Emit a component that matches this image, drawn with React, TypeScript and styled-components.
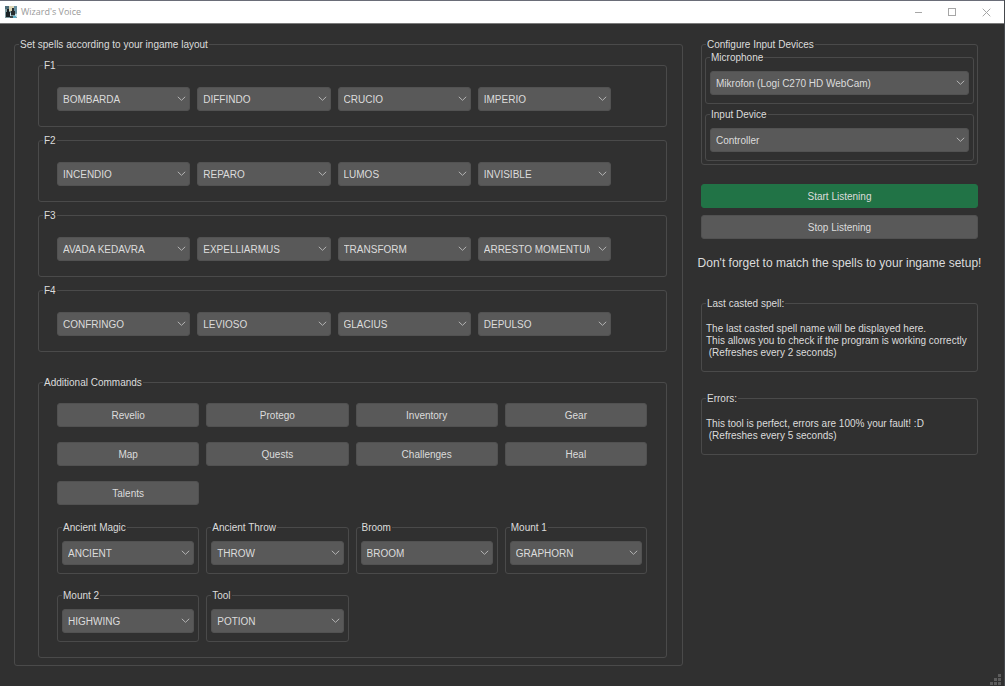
import React, { useId, useState } from "react";
import styled, { createGlobalStyle } from "styled-components";

const GlobalStyle = createGlobalStyle`
  *, *::before, *::after { box-sizing: border-box; }
  body {
    margin: 0;
    background: #303030;
    color: #dcdcdc;
    font: 10px/12px "Liberation Sans", Arial, sans-serif;
  }
  button, select { font: inherit; color: inherit; }
`;

const Window = styled.div`
  min-height: 100vh;
  display: flex;
  flex-direction: column;
  background: #303030;
  border-right: 1px solid #45484c;
`;

const TitleBar = styled.header`
  display: flex;
  align-items: center;
  height: 24px;
  padding: 0 1px 0 5px;
  background: #ffffff;
  border-top: 1px solid #6a6d78;
  border-bottom: 1px solid #7a7a7a;
`;

const Title = styled.h1`
  flex: 1;
  margin: 0 0 0 4px;
  font: 400 9px/12px "Open Sans", "Noto Sans", sans-serif;
  color: #999999;
`;

const CaptionButton = styled.button`
  display: grid;
  place-items: center;
  width: 34px;
  height: 22px;
  padding: 0;
  border: 0;
  background: transparent;
  color: #a6a6a6;
`;

const Main = styled.main`
  flex: 1;
  display: flex;
  align-items: flex-start;
  gap: 18px;
  padding: 14px 26px 0 14px;
`;

const SpellColumn = styled.div`
  flex: 1;
  min-width: 0;
`;

const SideColumn = styled.aside`
  width: 277px;
  flex: none;
`;

const Fieldset = styled.fieldset`
  min-width: 0;
  margin: 0;
  padding: 0;
  border: 1px solid #4a4a4a;
  border-radius: 3px;
`;

const Legend = styled.legend`
  margin-left: 4px;
  padding: 0 1px;
  line-height: 13px;
`;

const LayoutBody = styled.div`
  padding: 8px 15px 7px 23px;
`;

const SlotList = styled.div`
  display: grid;
  gap: 7px;
  margin-bottom: 24px;
`;

const SlotRow = styled.div`
  display: grid;
  grid-template-columns: repeat(4, minmax(0, 1fr));
  gap: 7px;
  padding: 15px 55px 15px 18px;
`;

const CommandBody = styled.div`
  display: grid;
  gap: 16px;
  padding: 14px 19px 15px 18px;
`;

const CommandGrid = styled.div`
  display: grid;
  grid-template-columns: repeat(4, minmax(0, 1fr));
  gap: 15px 7px;
`;

const PickerBody = styled.div`
  padding: 7px 4px 8px;
`;

const DeviceBody = styled.div`
  display: grid;
  gap: 4px;
  padding: 0 3px 3px;
`;

const Button = styled.button<{ $primary?: boolean }>`
  width: 100%;
  height: 24px;
  padding: 2px 0 0;
  border: 1px solid ${(p) => (p.$primary ? "#217346" : "#515151")};
  border-radius: 3px;
  background: ${(p) => (p.$primary ? "#217346" : "#595959")};
`;

const SelectFrame = styled.div`
  position: relative;
`;

const Select = styled.select`
  appearance: none;
  display: block;
  width: 100%;
  height: 24px;
  padding: 2px 20px 0 5px;
  border: 1px solid #525252;
  border-radius: 3px;
  background: #595959;
`;

const Chevron = styled.svg`
  position: absolute;
  right: 4px;
  top: 9px;
  pointer-events: none;
`;

const Actions = styled.div`
  display: grid;
  gap: 7px;
  margin-top: 19px;
`;

const Reminder = styled.p`
  display: flex;
  justify-content: center;
  margin: 14px 0 24px;
  font-size: 12px;
  line-height: 20px;
  white-space: nowrap;
`;

const Log = styled.p`
  margin: 0;
  padding: 13px 4px 12px;
  white-space: pre;
`;

const LogStack = styled.div`
  display: grid;
  gap: 20px;
`;

const StatusBar = styled.footer`
  display: flex;
  justify-content: flex-end;
  padding: 0 3px 1px 0;
`;

const SPELLS = [
  { key: "F1", spells: ["BOMBARDA", "DIFFINDO", "CRUCIO", "IMPERIO"] },
  { key: "F2", spells: ["INCENDIO", "REPARO", "LUMOS", "INVISIBLE"] },
  { key: "F3", spells: ["AVADA KEDAVRA", "EXPELLIARMUS", "TRANSFORM", "ARRESTO MOMENTUM"] },
  { key: "F4", spells: ["CONFRINGO", "LEVIOSO", "GLACIUS", "DEPULSO"] },
];
const ALL_SPELLS = SPELLS.flatMap((s) => s.spells);

const COMMANDS = [
  "Revelio", "Protego", "Inventory", "Gear",
  "Map", "Quests", "Challenges", "Heal", "Talents",
];

const PICKERS = [
  { label: "Ancient Magic", value: "ANCIENT" },
  { label: "Ancient Throw", value: "THROW" },
  { label: "Broom", value: "BROOM" },
  { label: "Mount 1", value: "GRAPHORN" },
  { label: "Mount 2", value: "HIGHWING" },
  { label: "Tool", value: "POTION" },
];

type DropdownProps = { initial: string; options?: string[]; label?: string; id?: string };

function Dropdown({ initial, options = [initial], label, id }: DropdownProps) {
  const [value, setValue] = useState(initial);
  return (
    <SelectFrame>
      <Select id={id} aria-label={label} value={value} onChange={(e) => setValue(e.target.value)}>
        {options.map((o) => (
          <option key={o}>{o}</option>
        ))}
      </Select>
      <Chevron width="9" height="6" viewBox="0 0 9 6" fill="none" stroke="#b4b4b4">
        <path d="M0.8 0.8 L4.5 4.3 L8.2 0.8" />
      </Chevron>
    </SelectFrame>
  );
}

function Picker({ label, value }: { label: string; value: string }) {
  const id = useId();
  return (
    <Fieldset>
      <Legend>
        <label htmlFor={id}>{label}</label>
      </Legend>
      <PickerBody>
        <Dropdown id={id} initial={value} />
      </PickerBody>
    </Fieldset>
  );
}

function AppIcon() {
  return (
    <svg width="12" height="12" viewBox="0 0 12 12" aria-hidden="true">
      <rect width="12" height="12" fill="#7f9ba0" />
      <rect width="5" height="3" fill="#4d6c78" />
      <rect x="4" width="5" height="5" fill="#ddd6b6" />
      <rect x="9" width="3" height="7" fill="#6890a0" />
      <path d="M2 3h2v3h1v5H1V6h1z" fill="#1b2225" />
      <path d="M7 2h2v3h1v4H6V5h1z" fill="#262c2e" />
      <path d="M5 7h1v3H5zM10 8h2v3h-2z" fill="#c6e2ea" />
      <path d="M5 10h3v2H5z" fill="#40484a" />
      <path d="M8 10h3v2H8z" fill="#5fb0c6" />
    </svg>
  );
}

function SizeGrip() {
  const dots = [[8, 0], [4, 4], [8, 4], [0, 8], [4, 8], [8, 8]];
  return (
    <svg width="11" height="11" viewBox="0 0 11 11" aria-hidden="true">
      {dots.map(([x, y]) => (
        <rect key={`${x}-${y}`} x={x} y={y} width="3" height="3" fill="#5c5c5c" />
      ))}
    </svg>
  );
}

export default function App() {
  return (
    <>
      <GlobalStyle />
      <Window>
        <TitleBar>
          <AppIcon />
          <Title>Wizard's Voice</Title>
          <CaptionButton aria-label="Minimize">
            <svg width="9" height="9" viewBox="0 0 9 9" stroke="currentColor"><path d="M1 4.5h7" /></svg>
          </CaptionButton>
          <CaptionButton aria-label="Maximize">
            <svg width="9" height="9" viewBox="0 0 9 9" fill="none" stroke="currentColor"><rect x="0.5" y="0.5" width="7" height="7" /></svg>
          </CaptionButton>
          <CaptionButton aria-label="Close">
            <svg width="9" height="9" viewBox="0 0 9 9" stroke="currentColor"><path d="M0.7 0.7l7.6 7.6M8.3 0.7l-7.6 7.6" /></svg>
          </CaptionButton>
        </TitleBar>

        <Main>
          <SpellColumn>
            <Fieldset>
              <Legend>Set spells according to your ingame layout</Legend>
              <LayoutBody>
                <SlotList>
                  {SPELLS.map(({ key, spells }) => (
                    <Fieldset key={key}>
                      <Legend>{key}</Legend>
                      <SlotRow>
                        {spells.map((s, i) => (
                          <Dropdown key={s} initial={s} options={ALL_SPELLS} label={`${key} slot ${i + 1}`} />
                        ))}
                      </SlotRow>
                    </Fieldset>
                  ))}
                </SlotList>
                <Fieldset>
                  <Legend>Additional Commands</Legend>
                  <CommandBody>
                    <CommandGrid>
                      {COMMANDS.map((c) => (
                        <Button key={c} type="button">{c}</Button>
                      ))}
                    </CommandGrid>
                    <CommandGrid>
                      {PICKERS.map((p) => (
                        <Picker key={p.label} {...p} />
                      ))}
                    </CommandGrid>
                  </CommandBody>
                </Fieldset>
              </LayoutBody>
            </Fieldset>
          </SpellColumn>

          <SideColumn>
            <Fieldset>
              <Legend>Configure Input Devices</Legend>
              <DeviceBody>
                <Picker label="Microphone" value="Mikrofon (Logi C270 HD WebCam)" />
                <Picker label="Input Device" value="Controller" />
              </DeviceBody>
            </Fieldset>
            <Actions>
              <Button type="button" $primary>Start Listening</Button>
              <Button type="button">Stop Listening</Button>
            </Actions>
            <Reminder>Don't forget to match the spells to your ingame setup!</Reminder>
            <LogStack>
              <Fieldset>
                <Legend>Last casted spell:</Legend>
                <Log>{"The last casted spell name will be displayed here.\nThis allows you to check if the program is working correctly\n (Refreshes every 2 seconds)"}</Log>
              </Fieldset>
              <Fieldset>
                <Legend>Errors:</Legend>
                <Log>{"This tool is perfect, errors are 100% your fault! :D\n (Refreshes every 5 seconds)"}</Log>
              </Fieldset>
            </LogStack>
          </SideColumn>
        </Main>

        <StatusBar>
          <SizeGrip />
        </StatusBar>
      </Window>
    </>
  );
}
